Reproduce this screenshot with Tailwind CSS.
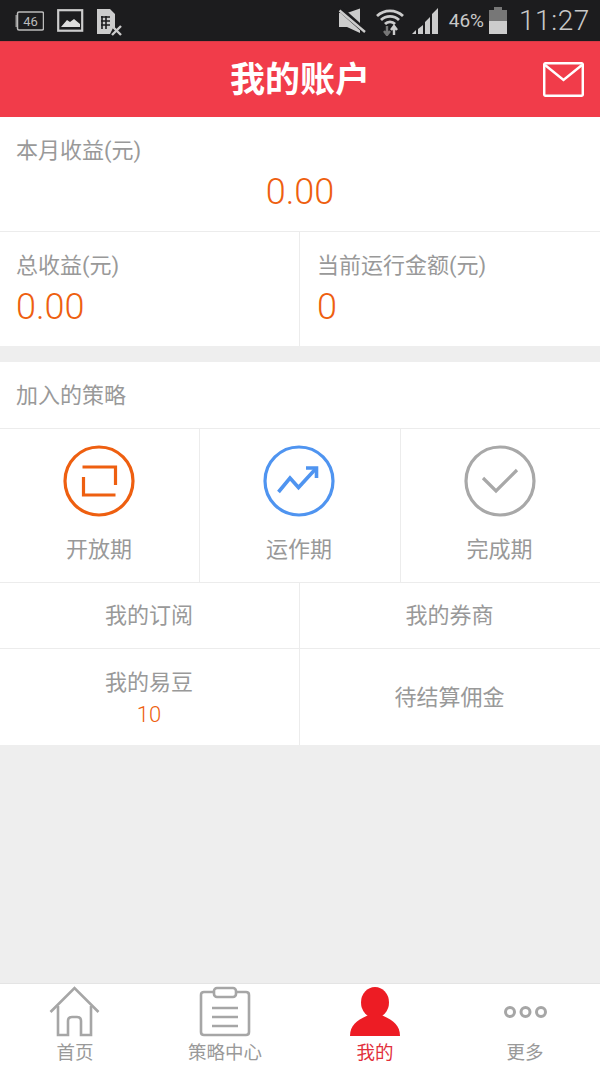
<!DOCTYPE html>
<html lang="zh">
<head>
    <meta charset="UTF-8">
    <meta name="viewport" content="width=device-width, initial-scale=1.0">
    <title>我的账户</title>
    <script src="https://cdn.jsdelivr.net/npm/@tailwindcss/browser@4"></script>
</head>
<body class="bg-[#eeeeee] w-[600px] h-[1067px] overflow-hidden flex flex-col font-['Roboto','Noto_Sans_CJK_SC',sans-serif]">
    <!-- status bar -->
    <div class="h-[41px] bg-[#1c1c1e] flex items-center justify-between shrink-0 text-[#c8c8c8]">
        <div class="flex items-center pl-[15px] gap-[13px]">
            <svg width="29" height="22" viewBox="0 0 29 22" fill="none">
                <rect x="2.5" y="2" width="26" height="18" rx="1.5" stroke="#bbb" stroke-width="1.5"/>
                <rect x="0.5" y="5" width="1.5" height="12" fill="#999"/>
                <text x="15.5" y="16" text-anchor="middle" font-size="13" fill="#bbb" font-family="Roboto">46</text>
            </svg>
            <svg width="27" height="23" viewBox="0 0 27 23">
                <rect x="1.2" y="1.2" width="24" height="20.5" fill="none" stroke="#ccc" stroke-width="2.2"/>
                <path d="M4 18 L10 11 L13 13 L17 10 L23 15 V18 Z" fill="#ddd"/>
            </svg>
            <svg width="27" height="28" viewBox="0 0 27 28" class="-ml-[1px] mt-[3px]">
                <path d="M1 1 H14 L19 6 V20 H17 L14 26 H1 Z" fill="#ccc"/>
                <path d="M5 9 H14 M5 13 H14 M5 17 H14 M6 8 V21 M10 8 V21" stroke="#1c1c1e" stroke-width="1.6"/>
                <path d="M16 18 L25 27 M25 18 L16 27" stroke="#ccc" stroke-width="2.4"/>
            </svg>
        </div>
        <div class="flex items-center">
            <svg width="28" height="28" viewBox="0 0 28 28" class="mr-[10px]">
                <path d="M1 6 H9 L22 1.5 V26 L9 20 H1 Z" fill="#ccc"/>
                <path d="M1 1 L28 25" stroke="#1c1c1e" stroke-width="5.5"/>
                <path d="M1.5 3.5 L27 25" stroke="#ccc" stroke-width="2.4"/>
            </svg>
            <svg width="28" height="30" viewBox="0 0 28 30" class="mr-[7px]">
                <path d="M1 10 A19 19 0 0 1 27 10 M5 14 A13 13 0 0 1 23 14 M9 18 A7 7 0 0 1 19 18" fill="none" stroke="#ccc" stroke-width="2.8"/>
                <path d="M11 20 V28 M8 25 L11 29 L14 25" stroke="#777" stroke-width="2.4" fill="none"/>
                <path d="M18 29 V21 M15 24 L18 20 L21 24" stroke="#ccc" stroke-width="2.4" fill="none"/>
            </svg>
            <svg width="28" height="28" viewBox="0 0 28 28" class="mr-[10px]">
                <path d="M1 27 H5 V23 Z M7 27 H12 V18 L7 22 Z M14 27 H19 V10 L14 15 Z M21 27 H27 V1 L21 7 Z" fill="#ccc"/>
            </svg>
            <span class="text-[19px] leading-none text-[#c8c8c8] mr-[5px]">46%</span>
            <svg width="18" height="27" viewBox="0 0 18 27" class="mr-[12px]">
                <rect x="5" y="0" width="8" height="3" fill="#777"/>
                <rect x="0" y="3" width="18" height="11" fill="#777"/>
                <rect x="0" y="14" width="18" height="13" fill="#ccc"/>
            </svg>
            <span class="text-[28px] leading-none font-light text-[#c8c8c8] tracking-[0.6px] mr-[10px]">11:27</span>
        </div>
    </div>

    <!-- header -->
    <header class="relative h-[76px] shrink-0 bg-[#f13c4a] border-t border-[#d93a46] flex items-center justify-center">
        <h1 class="text-[35px] leading-none font-bold text-white mt-[1px]">我的账户</h1>
        <svg width="41" height="35" viewBox="0 0 41 35" class="absolute right-[16px] top-[20px]" fill="none" stroke="#fff" stroke-width="2.5">
            <rect x="1.2" y="1.2" width="38.6" height="32.6" rx="1.5"/>
            <path d="M2 3 L20.5 18 L39 3"/>
        </svg>
    </header>

    <!-- earnings -->
    <section class="bg-white shrink-0">
        <div class="h-[115px] border-b border-[#ececec] pl-[16px] pt-[19px]">
            <p class="text-[22px] leading-[30px] text-[#999999]">本月收益(元)</p>
            <p class="text-[36px] leading-[40px] font-light text-[#ee5f10] text-center pr-[16px] mt-[6px]">0.00</p>
        </div>
        <div class="h-[114px] grid grid-cols-2">
            <div class="border-r border-[#ececec] pl-[16px] pt-[19px]">
                <p class="text-[22px] leading-[30px] text-[#999999]">总收益(元)</p>
                <p class="text-[36px] leading-[40px] font-light text-[#ee5f10] mt-[6px]">0.00</p>
            </div>
            <div class="pl-[17px] pt-[19px]">
                <p class="text-[22px] leading-[30px] text-[#999999]">当前运行金额(元)</p>
                <p class="text-[36px] leading-[40px] font-light text-[#ee5f10] mt-[6px]">0</p>
            </div>
        </div>
    </section>

    <!-- strategies -->
    <section class="bg-white shrink-0 mt-[16px]">
        <div class="h-[67px] border-b border-[#ececec] pl-[16px] flex items-center">
            <p class="text-[22px] text-[#999999]">加入的策略</p>
        </div>
        <div class="h-[154px] grid grid-cols-[200px_201px_199px] border-b border-[#ececec]">
            <div class="border-r border-[#ececec] flex flex-col items-center pt-[16px] pr-[1px]">
                <svg width="72" height="72" viewBox="0 0 72 72" fill="none" stroke="#ee5f10">
                    <circle cx="36" cy="36" r="34" stroke-width="3.2"/>
                    <path d="M19.5 22 H52.5 V40 M20.5 32 V50 H52.5" stroke-width="3.2"/>
                </svg>
                <span class="text-[22px] leading-[30px] text-[#999999] mt-[18px]">开放期</span>
            </div>
            <div class="border-r border-[#ececec] flex flex-col items-center pt-[16px] pr-[2px]">
                <svg width="72" height="72" viewBox="0 0 72 72" fill="none" stroke="#4f94f0">
                    <circle cx="36" cy="36" r="34" stroke-width="3.2"/>
                    <path d="M15.5 47 L27 33 L35.5 42.5 L52.5 24" stroke-width="3.6"/>
                    <path d="M43 23 H53.5 V33" stroke-width="3.6"/>
                </svg>
                <span class="text-[22px] leading-[30px] text-[#999999] mt-[18px]">运作期</span>
            </div>
            <div class="flex flex-col items-center pt-[16px] pr-[2px]">
                <svg width="72" height="72" viewBox="0 0 72 72" fill="none" stroke="#a8a8a8">
                    <circle cx="36" cy="36" r="34" stroke-width="3.2"/>
                    <path d="M19 33 L32 46 L53 25" stroke-width="3.2"/>
                </svg>
                <span class="text-[22px] leading-[30px] text-[#999999] mt-[18px]">完成期</span>
            </div>
        </div>
        <div class="grid grid-cols-2 h-[66px] border-b border-[#ececec]">
            <div class="border-r border-[#ececec] flex items-center justify-center text-[22px] text-[#999999] pr-[1px]">我的订阅</div>
            <div class="flex items-center justify-center text-[22px] text-[#999999] pr-[1px]">我的券商</div>
        </div>
        <div class="grid grid-cols-2 h-[96px]">
            <div class="border-r border-[#ececec] flex flex-col items-center pt-[19px] pr-[1px]">
                <span class="text-[22px] leading-[30px] text-[#999999]">我的易豆</span>
                <span class="text-[22px] leading-[30px] font-light text-[#ee5f10] mt-[2px]">10</span>
            </div>
            <div class="flex items-center justify-center text-[22px] text-[#999999] pr-[1px]">待结算佣金</div>
        </div>
    </section>

    <div class="flex-1"></div>

    <!-- tab bar -->
    <nav class="h-[84px] shrink-0 bg-white grid grid-cols-4 border-t border-[#e4e4e4]">
        <div class="flex flex-col items-center">
            <svg width="52" height="52" viewBox="0 0 52 52" fill="none" stroke="#a6a6a6" stroke-width="2.6" class="mt-[2px]">
                <path d="M1.5 26 L25.5 2 L49.5 26"/>
                <path d="M9 20 V49 H19 V35 Q19 31 23 31 H28 Q32 31 32 35 V49 H42 V20"/>
            </svg>
            <span class="text-[18.5px] leading-[22px] text-[#999999] mt-[4px]">首页</span>
        </div>
        <div class="flex flex-col items-center">
            <svg width="52" height="52" viewBox="0 0 52 52" fill="none" stroke="#a6a6a6" stroke-width="2.6" class="mt-[2px]">
                <path d="M15 6 H5 Q2 6 2 9 V46 Q2 49 5 49 H47 Q50 49 50 46 V9 Q50 6 47 6 H38"/>
                <rect x="15" y="2" width="22" height="9" rx="3"/>
                <path d="M13 22 H39 M13 31 H39 M13 40 H39"/>
            </svg>
            <span class="text-[18.5px] leading-[22px] text-[#999999] mt-[4px]">策略中心</span>
        </div>
        <div class="flex flex-col items-center">
            <svg width="52" height="52" viewBox="0 0 52 52" fill="#ed1c24" class="mt-[2px]">
                <ellipse cx="26" cy="16.5" rx="14" ry="15.5"/>
                <path d="M1 50 C1 38 10 33 22 28 H30 C42 33 51 38 51 50 Z"/>
            </svg>
            <span class="text-[18.5px] leading-[22px] text-[#e2303c] mt-[4px]">我的</span>
        </div>
        <div class="flex flex-col items-center">
            <svg width="52" height="52" viewBox="0 0 52 52" fill="none" stroke="#a6a6a6" stroke-width="3" class="mt-[2px]">
                <circle cx="11" cy="26" r="4.5"/>
                <circle cx="26.5" cy="26" r="4.5"/>
                <circle cx="42" cy="26" r="4.5"/>
            </svg>
            <span class="text-[18.5px] leading-[22px] text-[#999999] mt-[4px]">更多</span>
        </div>
    </nav>
</body>
</html>
